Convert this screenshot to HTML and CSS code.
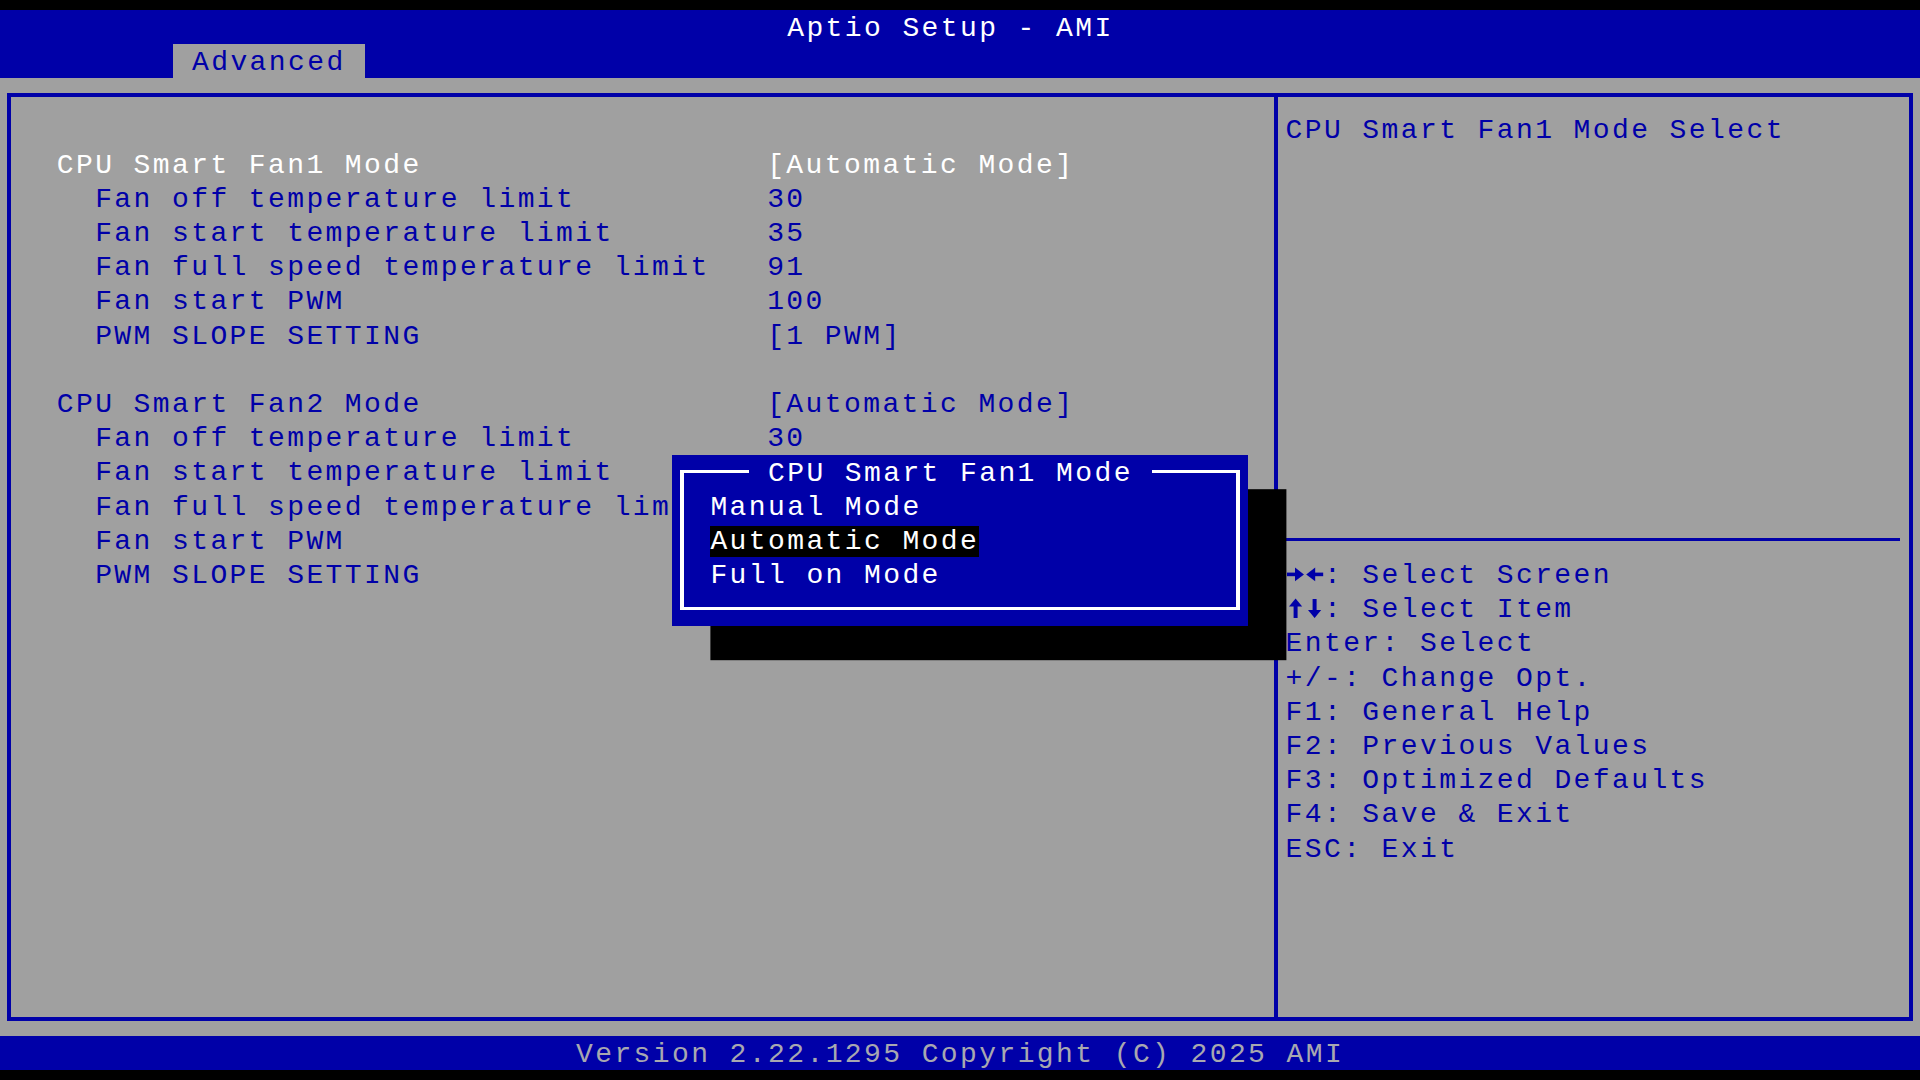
FILE: index.html
```html
<!DOCTYPE html>
<html lang="en">
<head>
<meta charset="utf-8">
<title>Aptio Setup - AMI</title>
<link rel="stylesheet" href="styles.css">
</head>
<body>
<div class="screen">
  <header class="topbar">
    <div class="title">Aptio Setup - AMI</div>
    <nav class="tabs"><span class="tab">Advanced</span></nav>
  </header>

  <main class="main">
    <div class="frame">
      <section class="left">
        <div class="row sel"><span class="lbl">CPU Smart Fan1 Mode</span><span class="val">[Automatic Mode]</span></div>
        <div class="row sub"><span class="lbl">Fan off temperature limit</span><span class="val">30</span></div>
        <div class="row sub"><span class="lbl">Fan start temperature limit</span><span class="val">35</span></div>
        <div class="row sub"><span class="lbl">Fan full speed temperature limit</span><span class="val">91</span></div>
        <div class="row sub"><span class="lbl">Fan start PWM</span><span class="val">100</span></div>
        <div class="row sub"><span class="lbl">PWM SLOPE SETTING</span><span class="val">[1 PWM]</span></div>
        <div class="row"></div>
        <div class="row"><span class="lbl">CPU Smart Fan2 Mode</span><span class="val">[Automatic Mode]</span></div>
        <div class="row sub"><span class="lbl">Fan off temperature limit</span><span class="val">30</span></div>
        <div class="row sub"><span class="lbl">Fan start temperature limit</span><span class="val">35</span></div>
        <div class="row sub"><span class="lbl">Fan full speed temperature limit</span><span class="val">91</span></div>
        <div class="row sub"><span class="lbl">Fan start PWM</span><span class="val">100</span></div>
        <div class="row sub"><span class="lbl">PWM SLOPE SETTING</span><span class="val">[1 PWM]</span></div>
      </section>

      <section class="right">
        <div class="help">CPU Smart Fan1 Mode Select</div>
        <div class="sep"></div>
        <div class="keys">
          <div class="row"><svg class="arr" viewBox="0 0 19.2 34.2" aria-label="right"><rect x="1" y="15.6" width="10" height="3.6"/><polygon points="9,10.6 18,17.4 9,24.2"/></svg><svg class="arr" viewBox="0 0 19.2 34.2" aria-label="left"><rect x="8.2" y="15.6" width="10" height="3.6"/><polygon points="10.2,10.6 1.2,17.4 10.2,24.2"/></svg>: Select Screen</div>
          <div class="row"><svg class="arr" viewBox="0 0 19.2 34.2" aria-label="up"><rect x="7.6" y="14" width="4" height="13"/><polygon points="3,15.5 9.6,7.5 16.2,15.5"/></svg><svg class="arr" viewBox="0 0 19.2 34.2" aria-label="down"><rect x="7.6" y="8" width="4" height="13"/><polygon points="3,19 9.6,27 16.2,19"/></svg>: Select Item</div>
          <div class="row">Enter: Select</div>
          <div class="row">+/-: Change Opt.</div>
          <div class="row">F1: General Help</div>
          <div class="row">F2: Previous Values</div>
          <div class="row">F3: Optimized Defaults</div>
          <div class="row">F4: Save &amp; Exit</div>
          <div class="row">ESC: Exit</div>
        </div>
      </section>
    </div>
  </main>

  <footer class="footer">Version 2.22.1295 Copyright (C) 2025 AMI</footer>

  <div class="popup">
    <div class="pbox">
      <div class="prow">Manual Mode</div>
      <div class="prow"><span class="hl">Automatic Mode</span></div>
      <div class="prow">Full on Mode</div>
    </div>
    <div class="ptitle">CPU Smart Fan1 Mode</div>
  </div>
</div>
</body>
</html>
```

FILE: styles.css
```css
:root {
  --cw: 19.2px;
  --rh: 34.2px;
  --lh: 37.4px;
  --blue: #0000a8;
  --gray: #a0a0a0;
}

html, body {
  margin: 0;
  padding: 0;
  background: #000;
}

body {
  font-family: "Liberation Mono", "DejaVu Sans Mono", monospace;
  font-size: 28px;
  letter-spacing: 2.4px;
  line-height: var(--lh);
  color: var(--blue);
}

.screen {
  position: relative;
  width: 1920px;
  height: 1080px;
  padding-top: 9.9px;
  box-sizing: border-box;
  overflow: hidden;
  background: #000;
}

/* header */
.topbar {
  background: var(--blue);
}

.title {
  height: var(--rh);
  padding-left: calc(41 * var(--cw));
  color: #fff;
  white-space: pre;
}

.tabs {
  display: flex;
  height: var(--rh);
  padding-left: calc(9 * var(--cw));
}

.tab {
  height: var(--rh);
  background: var(--gray);
  color: var(--blue);
  padding: 0 var(--cw);
}

/* main area */
.main {
  height: calc(28 * var(--rh));
  box-sizing: border-box;
  background: var(--gray);
  padding: 15.2px 7.2px;
}

.frame {
  display: flex;
  height: 100%;
  box-sizing: border-box;
  border-style: solid;
  border-color: var(--blue);
  border-width: 4px 4.8px;
}

.left {
  width: 1267.2px;
  flex: none;
  box-sizing: border-box;
  border-right: 4.8px solid var(--blue);
  padding-top: 49.2px;
  padding-left: 45.6px;
}

.row {
  display: flex;
  height: var(--rh);
  white-space: pre;
}

.lbl {
  flex: none;
  width: calc(37 * var(--cw));
  box-sizing: border-box;
}

.sub .lbl {
  padding-left: calc(2 * var(--cw));
}

.sel {
  color: #fff;
}

.right {
  flex: 1;
  min-width: 0;
  padding-top: 15px;
  padding-left: 7.2px;
}

.help {
  height: calc(12 * var(--rh));
  white-space: pre;
}

.sep {
  width: calc(32 * var(--cw));
  height: var(--rh);
  background: linear-gradient(var(--blue), var(--blue)) center / 100% 3px no-repeat;
}

.arr {
  flex: none;
  width: var(--cw);
  height: var(--rh);
  fill: currentColor;
}

/* footer */
.footer {
  height: var(--rh);
  background: var(--blue);
  color: #a8a8b0;
  padding-left: calc(30 * var(--cw));
  white-space: pre;
}

/* popup dialog */
.popup {
  position: absolute;
  left: calc(35 * var(--cw));
  top: calc(9.9px + 13 * var(--rh));
  width: calc(30 * var(--cw));
  height: calc(5 * var(--rh));
  box-sizing: border-box;
  padding: 15.6px 7.6px;
  background: var(--blue);
  box-shadow: calc(2 * var(--cw)) var(--rh) 0 #000;
  color: #fff;
}

.pbox {
  height: 100%;
  box-sizing: border-box;
  border-style: solid;
  border-color: #fff;
  border-width: 3px 4px;
  padding-top: 15.6px;
  padding-left: 26.8px;
}

.prow {
  height: var(--rh);
  white-space: pre;
}

.hl {
  background: #000;
  color: #fff;
}

.ptitle {
  position: absolute;
  left: calc(4 * var(--cw));
  top: 0;
  height: var(--rh);
  padding: 0 var(--cw);
  background: var(--blue);
  color: #fff;
  white-space: pre;
}
```
